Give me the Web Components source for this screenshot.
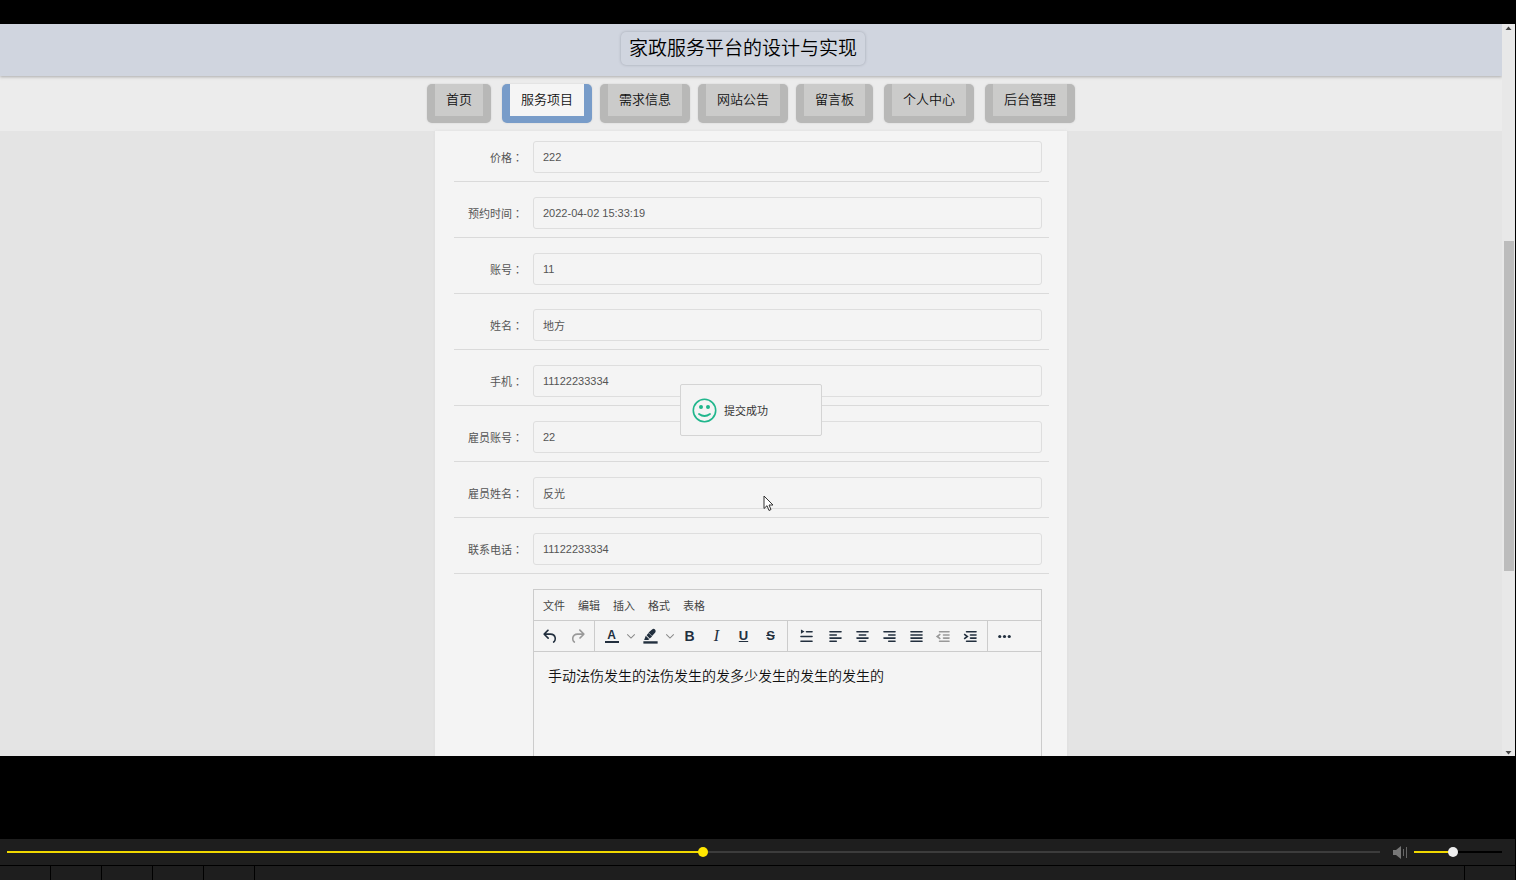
<!DOCTYPE html>
<html lang="zh-CN">
<head>
    <meta charset="UTF-8">
    <title>家政服务平台的设计与实现</title>
    <style>
        body {
            margin: 0;
            background: #000;
            font-family: "Liberation Sans", "Noto Sans CJK SC", sans-serif;
            font-size: 11px;
            color: #555;
        }
    </style>
</head>
<body>
<video-player>
    <site-header>家政服务平台的设计与实现</site-header>
    <site-nav>
        <nav-group>
            <nav-item>首页</nav-item>
        </nav-group>
        <nav-group>
            <nav-item active>服务项目</nav-item>
            <nav-item>需求信息</nav-item>
            <nav-item>网站公告</nav-item>
            <nav-item>留言板</nav-item>
        </nav-group>
        <nav-group>
            <nav-item>个人中心</nav-item>
        </nav-group>
        <nav-group>
            <nav-item>后台管理</nav-item>
        </nav-group>
    </site-nav>
    <form-card>
        <form-row label="价格" value="222"></form-row>
        <form-row label="预约时间" value="2022-04-02 15:33:19"></form-row>
        <form-row label="账号" value="11"></form-row>
        <form-row label="姓名" value="地方"></form-row>
        <form-row label="手机" value="11122233334"></form-row>
        <form-row label="雇员账号" value="22"></form-row>
        <form-row label="雇员姓名" value="反光"></form-row>
        <form-row label="联系电话" value="11122233334"></form-row>
        <rich-editor value="手动法伤发生的法伤发生的发多少发生的发生的发生的"></rich-editor>
    </form-card>
    <toast-message slot="overlay">提交成功</toast-message>
    <mouse-pointer slot="overlay"></mouse-pointer>
</video-player>

<script>
    // Gắn shadow root và nội dung cho từng thành phần
    class BaseElement extends HTMLElement {
        constructor() {
            super();
            this.attachShadow({mode: 'open'});
        }

        connectedCallback() {
            this.shadowRoot.innerHTML = this.render();
        }
    }

    // Khung video: trang web bên trong, thanh cuộn và thanh điều khiển
    class VideoPlayer extends BaseElement {
        render() {
            return `
            <style>
                :host {
                    display: flex;
                    flex-direction: column;
                    height: 100vh;
                    padding-top: 24px;
                    box-sizing: border-box;
                }
                .frame {
                    position: relative;
                    display: flex;
                    flex: 1;
                    min-height: 0;
                    overflow: hidden;
                    margin: 0 1px 83px 0;
                }
                .page {
                    position: relative;
                    flex: 1;
                    min-width: 0;
                    overflow: hidden;
                    background: #e4e4e4;
                }
            </style>
            <div class="frame">
                <div class="page">
                    <slot></slot>
                    <slot name="overlay"></slot>
                </div>
                <page-scrollbar></page-scrollbar>
            </div>
            <player-controls></player-controls>`;
        }
    }

    class PageScrollbar extends BaseElement {
        render() {
            return `
            <style>
                :host {
                    display: flex;
                    flex-direction: column;
                    align-items: center;
                    width: 13px;
                    background: #e8e8e8;
                }
                svg { width: 7px; height: 8px; fill: #444; }
                .before { flex: 209; }
                .thumb { flex: 330; width: 10px; background: #bcbcbc; }
                .after { flex: 177; }
            </style>
            <svg viewBox="0 0 7 8"><path d="M3.5 2.5L6.500 6h-6z"/></svg>
            <div class="before"></div>
            <div class="thumb"></div>
            <div class="after"></div>
            <svg viewBox="0 0 7 8"><path d="M.5 3h6l-3 3.500z"/></svg>`;
        }
    }

    class SiteHeader extends BaseElement {
        render() {
            return `
            <style>
                :host {
                    position: relative;
                    z-index: 1;
                    display: flex;
                    justify-content: center;
                    align-items: flex-start;
                    height: 52px;
                    padding: 8px 16px 0 0;
                    box-sizing: border-box;
                    background: #d0d5df;
                    box-shadow: 0 1px 3px #aaa;
                }
                h1 {
                    margin: 0;
                    padding: 0 8px;
                    font-size: 19px;
                    font-weight: 350;
                    line-height: 33px;
                    color: #000;
                    border-radius: 5px;
                    box-shadow: 0 0 3px #a0a5b0;
                }
            </style>
            <h1><slot></slot></h1>`;
        }
    }

    class SiteNav extends BaseElement {
        render() {
            return `
            <style>
                :host { display: block; background: #ececec; }
                nav {
                    display: flex;
                    justify-content: center;
                    gap: 11px;
                    padding: 8px;
                }
            </style>
            <nav><slot></slot></nav>`;
        }
    }

    class NavGroup extends BaseElement {
        render() {
            return `
            <style>
                :host { display: flex; gap: 8px; }
            </style>
            <slot></slot>`;
        }
    }

    class NavItem extends BaseElement {
        render() {
            return `
            <style>
                :host {
                    display: block;
                    padding: 0 8px 7px;
                    background: #b8b8b7;
                    border-radius: 5px;
                    box-shadow: 0 0 2px #ccc;
                }
                a {
                    display: block;
                    padding: 0 11px;
                    font-size: 13px;
                    font-weight: 350;
                    line-height: 32px;
                    color: #111;
                    text-decoration: none;
                    background: #cbcbca;
                }
                :host([active]) { background: #789cc9; }
                :host([active]) a { background: #f5f5f5; }
            </style>
            <a href="#"><slot></slot></a>`;
        }
    }

    class FormCard extends BaseElement {
        render() {
            return `
            <style>
                :host {
                    display: block;
                    width: 100%;
                    max-width: 632px;
                    min-height: 100%;
                    margin: 0 auto;
                    padding: 0 18px 30px 19px;
                    box-sizing: border-box;
                    background: #f4f4f4;
                    box-shadow: 0 0 3px #ddd;
                }
                ::slotted(form-row:first-of-type) { --space: 10px; }
            </style>
            <slot></slot>`;
        }
    }

    class FormRow extends BaseElement {
        render() {
            return `
            <style>
                :host {
                    display: flex;
                    padding: var(--space, 15px) 7px 8px 0;
                    border-bottom: 1px solid #dadada;
                }
                label {
                    width: 79px;
                    height: 32px;
                    padding-right: 10px;
                    box-sizing: border-box;
                    text-align: right;
                    line-height: 34px;
                }
                /* dấu hai chấm nằm giữa ô */
                span { font-family: "Noto Sans CJK TC", sans-serif; line-height: 1; }
                input {
                    flex: 1;
                    min-width: 0;
                    height: 32px;
                    padding: 0 9px;
                    box-sizing: border-box;
                    font: inherit;
                    color: inherit;
                    background: #f4f4f4;
                    border: 1px solid #dedede;
                    border-radius: 3px;
                    outline: none;
                }
            </style>
            <label for="field">${this.getAttribute('label')}<span lang="zh-TW">：</span></label>
            <input id="field" type="text" value="${this.getAttribute('value')}">`;
        }
    }

    // Các biểu tượng của thanh công cụ, lưới 24x24
    const lines = (...rows) => rows.map(([x, y, w]) => `<rect x="${x}" y="${y}" width="${w}" height="2" rx="1"/>`).join('');
    const ICONS = {
        undo: '<path d="M6.400 8H12c3.700 0 6.200 2 6.800 5.100.6 2.700-.4 5.600-2.300 6.800a1 1 0 0 1-1-1.800c1.100-.6 1.800-2.700 1.400-4.600-.5-2.100-2.100-3.500-4.900-3.500H6.400l3.300 3.300a1 1 0 1 1-1.400 1.400l-5-5a1 1 0 0 1 0-1.400l5-5a1 1 0 0 1 1.400 1.400L6.400 8z"/>',
        redo: '<path d="M17.600 10H12c-2.800 0-4.400 1.400-4.900 3.500-.4 2 .3 4 1.400 4.600a1 1 0 1 1-1 1.800c-2-1.200-2.900-4.100-2.300-6.800.6-3 3-5.100 6.800-5.100h5.600l-3.300-3.300a1 1 0 1 1 1.400-1.400l5 5a1 1 0 0 1 0 1.400l-5 5a1 1 0 0 1-1.400-1.400l3.300-3.300z"/>',
        highlight: '<rect x="3" y="18" width="18" height="3"/><path d="M4 16.500l2-5.500 4.500 4.500-1.500 1zM7 10.500l2.500-3 4.500 4.500-3 2.500zM9.500 7l4.500-4q2-1.500 3.700.2t.3 3.800l-4 4.500z"/>',
        lineheight: '<path d="M5 3l4.500 2.700L5 8.500z"/>' + lines([11, 5, 9], [4, 11, 16], [4, 17, 16]),
        left: lines([4, 5, 16], [4, 9, 10], [4, 13, 16], [4, 17, 10]),
        center: lines([4, 5, 16], [7, 9, 10], [4, 13, 16], [7, 17, 10]),
        right: lines([4, 5, 16], [10, 9, 10], [4, 13, 16], [10, 17, 10]),
        justify: lines([4, 5, 16], [4, 9, 16], [4, 13, 16], [4, 17, 16]),
        outdent: lines([6, 5, 14], [11, 9, 9], [11, 13, 9], [6, 17, 14]) + '<path d="M8 9l-4 3 4 3" fill="none" stroke="currentColor" stroke-width="2"/>',
        indent: lines([6, 5, 14], [11, 9, 9], [11, 13, 9], [6, 17, 14]) + '<path d="M4 9l4 3-4 3" fill="none" stroke="currentColor" stroke-width="2"/>',
        more: '<circle cx="6" cy="12" r="2"/><circle cx="12" cy="12" r="2"/><circle cx="18" cy="12" r="2"/>',
        chevron: '<path d="M3 8l9 9 9-9" fill="none" stroke="currentColor" stroke-width="2.500"/>'
    };

    class ToolButton extends BaseElement {
        render() {
            const icon = this.getAttribute('icon');
            return `
            <style>
                :host { display: flex; width: 27px; color: #222f3e; }
                :host([wide]) { width: 31px; }
                :host([icon="chevron"]) { width: 12px; --size: 10px; color: #888; }
                :host([off]) { color: #999; }
                button {
                    display: grid;
                    place-items: center;
                    width: 100%;
                    padding: 0;
                    color: inherit;
                    font: inherit;
                    background: none;
                    border: 0;
                }
                svg { width: var(--size, 19px); height: var(--size, 19px); fill: currentColor; }
            </style>
            <button type="button">${icon ? `<svg viewBox="0 0 24 24">${ICONS[icon]}</svg>` : '<slot></slot>'}</button>`;
        }
    }

    class RichEditor extends BaseElement {
        render() {
            return `
            <style>
                :host {
                    display: block;
                    margin: 15px 7px 0 79px;
                    border: 1px solid #ccc;
                }
                .menubar, .toolbar { display: flex; height: 30px; border-bottom: 1px solid #ccc; }
                .menubar { gap: 13px; padding: 0 9px; color: #444; }
                .menubar button { padding: 0; font: inherit; line-height: 32px; color: inherit; background: none; border: 0; }
                .group { display: flex; padding: 0 3px; border-right: 1px solid #ccc; }
                .group:last-child { border: 0; }
                b, i, u, s { font-size: 14px; line-height: 16px; }
                u, s { font-size: 13px; font-weight: bold; }
                i { font-family: "Liberation Serif", serif; font-size: 16px; }
                .color { width: 14px; font-size: 12px; font-weight: bold; line-height: 11px; border-bottom: 2px solid; }
                textarea {
                    display: block;
                    width: 100%;
                    height: 240px;
                    padding: 13px 14px;
                    box-sizing: border-box;
                    font: inherit;
                    font-size: 14px;
                    font-weight: 350;
                    line-height: 22px;
                    color: #111;
                    background: none;
                    border: 0;
                    outline: none;
                    resize: none;
                }
            </style>
            <div class="menubar">
                <button>文件</button>
                <button>编辑</button>
                <button>插入</button>
                <button>格式</button>
                <button>表格</button>
            </div>
            <div class="toolbar">
                <div class="group">
                    <tool-button icon="undo"></tool-button>
                    <tool-button icon="redo" off></tool-button>
                </div>
                <div class="group">
                    <tool-button><span class="color">A</span></tool-button>
                    <tool-button icon="chevron"></tool-button>
                    <tool-button icon="highlight"></tool-button>
                    <tool-button icon="chevron"></tool-button>
                    <tool-button><b>B</b></tool-button>
                    <tool-button><i>I</i></tool-button>
                    <tool-button><u>U</u></tool-button>
                    <tool-button><s>S</s></tool-button>
                </div>
                <div class="group">
                    <tool-button icon="lineheight" wide></tool-button>
                    <tool-button icon="left"></tool-button>
                    <tool-button icon="center"></tool-button>
                    <tool-button icon="right"></tool-button>
                    <tool-button icon="justify"></tool-button>
                    <tool-button icon="outdent" off></tool-button>
                    <tool-button icon="indent"></tool-button>
                </div>
                <div class="group">
                    <tool-button icon="more"></tool-button>
                </div>
            </div>
            <textarea>${this.getAttribute('value')}</textarea>`;
        }
    }

    // Thông báo nổi giữa trang
    class ToastMessage extends BaseElement {
        render() {
            return `
            <style>
                :host {
                    position: absolute;
                    z-index: 10;
                    top: 360px;
                    left: 50%;
                    transform: translateX(-50%);
                    display: flex;
                    align-items: center;
                    gap: 7px;
                    width: 142px;
                    height: 52px;
                    padding-left: 11px;
                    box-sizing: border-box;
                    color: #333;
                    background: #f4f4f4;
                    border: 1px solid #d4d4d4;
                    border-radius: 2px;
                }
                svg { width: 25px; height: 25px; }
            </style>
            <svg viewBox="0 0 25 25" fill="none" stroke="#20b68c" stroke-width="1.600" stroke-linecap="round">
                <circle cx="12.500" cy="12.500" r="11.200"/>
                <path d="M7 16q5.500 4 11 0" stroke-width="1.800"/>
                <circle cx="9" cy="9" r="1.200" fill="#20b68c"/>
                <circle cx="16" cy="9" r="1.200" fill="#20b68c"/>
            </svg>
            <slot></slot>`;
        }
    }

    class MousePointer extends BaseElement {
        render() {
            return `
            <style>
                :host { position: absolute; z-index: 11; left: 763px; top: 471px; }
                svg { display: block; width: 11px; height: 17px; }
            </style>
            <svg viewBox="0 0 11 17" fill="#fff" stroke="#333"><path d="M1 1v12.500l3-2.800 2 4.800 2-1-2-4.500h4z"/></svg>`;
        }
    }

    class PlayerControls extends BaseElement {
        render() {
            return `
            <style>
                :host { display: block; border-right: 1px solid #000; }
                .bar {
                    display: flex;
                    align-items: center;
                    height: 26px;
                    padding: 0 13px 0 7px;
                    box-sizing: border-box;
                    background: #1e1e1e;
                }
                input {
                    appearance: none;
                    height: 12px;
                    margin: 0;
                    background: linear-gradient(to right, #f0d800 var(--fill), var(--rest) var(--fill)) center / 100% 2px no-repeat;
                }
                input::-webkit-slider-thumb {
                    appearance: none;
                    width: 10px;
                    height: 10px;
                    background: var(--knob);
                    border-radius: 50%;
                }
                .progress { flex: 1; --fill: 51%; --rest: #3c3c3c; --knob: #ffe600; }
                .volume { width: 88px; --fill: 45%; --rest: #000; --knob: #eee; }
                svg { width: 15px; height: 13px; margin: 0 6px 0 13px; }
                .buttons { display: flex; height: 14px; margin-top: 1px; gap: 1px; }
                button { width: 50px; padding: 0; background: #1e1e1e; border: 0; }
                .fill { flex: 1; background: #1e1e1e; }
            </style>
            <div class="bar">
                <input class="progress" type="range" min="0" max="1000" value="507" aria-label="进度">
                <svg viewBox="0 0 15 13"><path d="M0 4h3l5-4v13L3 9H0z" fill="#777"/><path d="M10.500 3v7M13.500 1v11" stroke="#666"/></svg>
                <input class="volume" type="range" min="0" max="1000" value="436" aria-label="音量">
            </div>
            <div class="buttons">
                <button></button>
                <button></button>
                <button></button>
                <button></button>
                <button></button>
                <div class="fill"></div>
                <button></button>
            </div>`;
        }
    }

    customElements.define('video-player', VideoPlayer);
    customElements.define('page-scrollbar', PageScrollbar);
    customElements.define('site-header', SiteHeader);
    customElements.define('site-nav', SiteNav);
    customElements.define('nav-group', NavGroup);
    customElements.define('nav-item', NavItem);
    customElements.define('form-card', FormCard);
    customElements.define('form-row', FormRow);
    customElements.define('tool-button', ToolButton);
    customElements.define('rich-editor', RichEditor);
    customElements.define('toast-message', ToastMessage);
    customElements.define('mouse-pointer', MousePointer);
    customElements.define('player-controls', PlayerControls);
</script>
</body>
</html>
